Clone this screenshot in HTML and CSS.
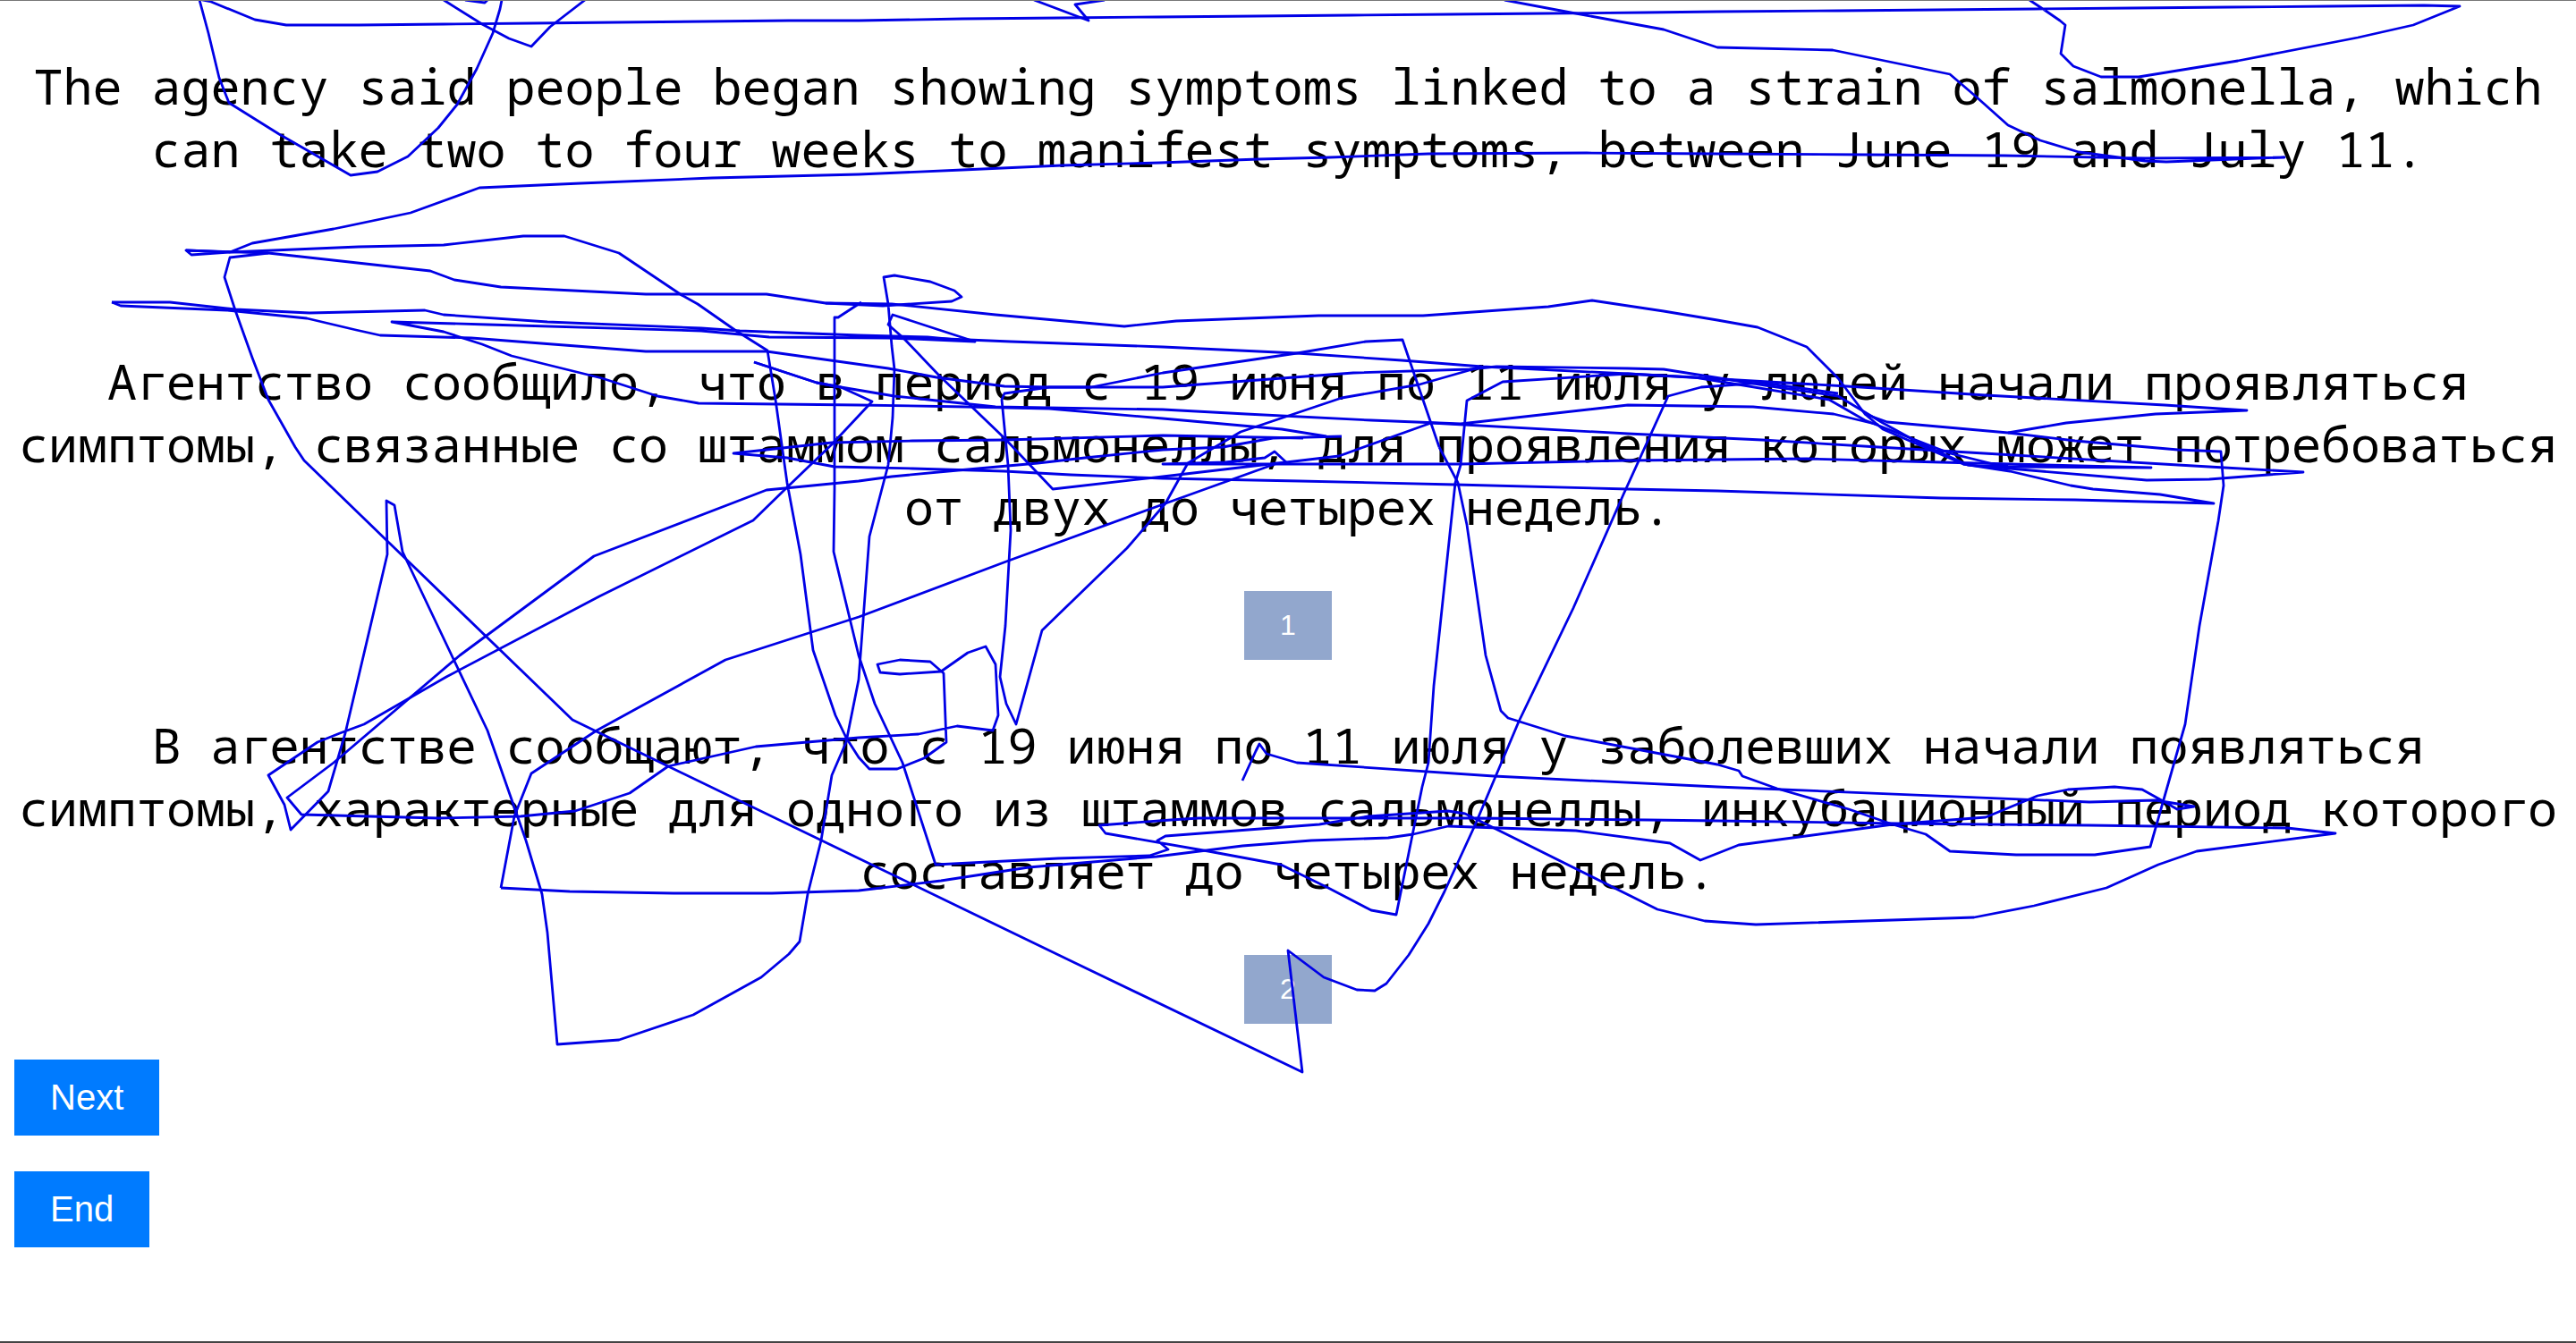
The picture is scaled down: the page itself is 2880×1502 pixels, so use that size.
FILE: index.html
```html
<!DOCTYPE html>
<html lang="en">

<head>
    <meta charset="UTF-8">
    <meta name="viewport" content="width=device-width, initial-scale=1.0">
    <title>Annotation</title>
    <link rel="stylesheet" href="styles.css">
</head>

<body>
    <div class="page">
        <p class="text source">The agency said people began showing symptoms linked to a strain of salmonella, which can take two to four weeks to manifest symptoms, between June 19 and July 11.</p>

        <p class="text option">Агентство сообщило, что в период с 19 июня по 11 июля у людей начали проявляться симптомы, связанные со штаммом сальмонеллы, для проявления которых может потребоваться от двух до четырех недель.</p>
        <div class="badge">1</div>

        <p class="text variant">В агентстве сообщают, что с 19 июня по 11 июля у заболевших начали появляться симптомы, характерные для одного из штаммов сальмонеллы, инкубационный период которого составляет до четырех недель.</p>
        <div class="badge">2</div>

        <div class="actions">
            <button type="button" class="btn">Next</button>
            <button type="button" class="btn">End</button>
        </div>

        <!-- pen strokes drawn over the page -->
        <svg class="scribble" viewBox="0 0 2880 1502" width="2880" height="1502">
            <polyline points="223,0 233,37 245,87 256,115 312,150 392,196 422,192 456,175 490,143 511,117 533,77 551,37 559,10 561,0" />
            <polyline points="226,0 236,2 285,22 320,28 401,28 496,27 594,26 689,25 787,24 882,23 960,23 1076,21 1187,20 1294,19 1404,18 1511,17 1621,16 1728,15 1839,14 1920,13 2055,12 2165,11 2275,10 2383,9 2492,8 2603,7 2710,6 2750,7 2698,28 2636,42 2502,68 2391,86 2349,86 2318,74 2304,60 2309,28 2303,23 2287,12 2269,0" />
            <polyline points="496,0 539,27 569,43 594,52 615,30 654,0" />
            <polyline points="520,0 542,3 545,0" />
            <polyline points="1156,0 1217,23 1202,5 1235,0" />
            <polyline points="1682,0 1756,14 1860,33 1920,53 2049,56 2180,83 2208,107 2245,140 2281,157 2324,170 2398,180 2422,181 2554,176 2398,177 2241,174 2085,173 1920,172 1774,171 1597,172 1487,176 1407,178 1297,182 1187,185 1076,190 960,195 796,199 649,205 536,210 459,238 373,256 282,272 257,282 214,285 208,280 300,283 481,303 508,313 560,321 722,329 857,329 923,339 987,342 1064,337 1075,332 1067,325 1040,315 1000,308 988,310 993,340 997,387 1000,413 998,467 993,520 972,600 960,760 946,830 930,867 918,940 903,1000 894,1053 882,1067 851,1093 775,1135 692,1163 623,1168 612,1043 606,1000 588,940 545,817 505,733 450,617 441,565 432,560 433,620 386,820 367,885 325,928 318,900 300,867 355,830 380,820 407,810 499,757 670,667 842,582 880,545 930,497 975,449 940,433 913,428 843,405" />
            <polyline points="208,280 257,282 401,276 496,274 585,264 631,264 692,283 762,330 780,340 823,370 858,392 867,447 880,540 895,620 909,727 934,800 946,825 960,847 972,860 1003,860 1033,848 1058,830 1055,753 1040,740 1006,738 981,743 984,752 1006,754 1052,751 1082,730 1102,723 1113,743 1116,800 1110,817 1070,812 1027,821 960,825 845,835 747,857 704,887 643,907 582,913 490,915 337,911 321,892 373,853 514,733 664,622 857,548 960,538 997,533 1060,527 1160,518 1213,512 1300,503 1367,500 1423,490 1500,488" />
            <polyline points="1090,382 1047,368 998,352 993,363 1010,378 1050,420 1123,490 1177,547 1300,533 1428,518 1438,517 1425,505 1414,512 1370,517 1300,519 1633,519 1820,515 2020,513 2170,517 2405,523 2245,522 2195,519" />
            <polyline points="963,338 937,355 933,355 933,547 932,617 960,733 978,787 1009,853 1046,967 1183,960 1285,957 1306,950 1294,940 1303,935 1475,922 1530,913 1619,907 1638,910 1853,1017 1906,1030 1963,1034 2207,1026 2274,1013 2355,993 2413,967 2456,952 2611,932 2557,926 2336,923 2122,921 1920,918 1842,917 1652,915 1340,915 1309,917 1229,923 1236,932 1351,952 1432,967 1485,993 1533,1018 1561,1023 1590,880 1597,853 1603,767 1627,540 1633,520 1640,448 1680,427 1820,418 1895,422 2045,447 2085,470 2180,507 2245,523" />
            <polyline points="560,993 575,913 594,865 667,817 811,738 960,690 1125,628 1303,563 1428,518" />
            <polyline points="560,993 637,997 753,999 863,999 960,996 1052,985 1150,970 1293,958 1389,946 1466,940 1552,937 1580,933 1619,924 1762,929 1867,943 1901,962 1944,945 2116,922 2220,914 2278,890 2312,883 2364,880 2395,883 2422,898 2434,905 2453,902 2410,895 2336,897 1920,880 1670,868 1450,853 1416,843 1408,832 1404,840 1389,873" />
            <polyline points="300,283 257,288 251,310 263,347 282,400 300,447 330,500 340,515 435,607 640,805 747,857 960,960 1200,1076 1456,1199 1440,1063 1480,1093 1517,1107 1537,1108 1550,1100 1575,1068 1597,1033 1615,997 1649,923 1698,807 1759,680 1815,553 1865,443 1902,433 1970,428 2055,440" />
            <polyline points="1609,500 1568,380 1527,382 1450,395 1300,417 1220,433 1173,433 1123,440 1120,447 1127,520 1130,593 1124,700 1118,757 1125,787 1136,810 1165,705 1260,613 1303,563 1328,518 1387,483 1500,445 1587,430 1650,412" />
            <polyline points="1609,500 1630,540 1640,587 1661,733 1678,795 1686,803 1750,823 1920,855 1944,862 1948,868 1987,882 2067,905 2116,922 2153,933 2180,952 2254,956 2342,956 2404,947 2443,810 2459,700 2480,583 2486,543 2483,505 2435,503 2320,493 2245,484 2110,472 2085,463" />
            <polyline points="125,338 135,342 254,347 343,356 398,369 425,375 527,378 722,393 857,393 993,412 1047,422 1123,432 1173,433 1300,433 1513,417 1643,413 1673,410 1820,412 1860,413 1980,432 2055,443 2105,473 2145,495 2200,520 2400,537 2470,536 2575,528 2487,523 2435,520 2235,508 2100,500 1970,492 1820,485 1600,473 1497,510 1438,517" />
            <polyline points="125,338 190,338 263,346 346,350 475,347 496,352 612,360 784,367 827,370 960,375 1037,377 1090,382 993,378 860,377 784,370 545,363 438,360 496,371 539,385 572,398 673,423 735,443 781,451 960,453 1080,455 1173,457 1300,468 1433,480 1483,488" />
            <polyline points="1010,377 1130,382 1300,388 1450,395 1567,403 1657,410 1820,418 2065,432 2220,442 2420,453 2512,459 2410,463 2310,473 2245,484" />
            <polyline points="843,405 913,428 940,433 1000,443 1047,448 1113,455 1300,458 1393,463 1533,470 1633,474 1820,453 1960,455 2050,463 2100,475" />
            <polyline points="923,339 997,340 1113,352 1257,365 1315,359 1474,353 1591,353 1731,343 1780,336 1860,348 1920,358 1965,366 2020,388 2055,423 2085,463 2105,480 2195,519 2247,527 2315,543 2340,547 2415,553 2475,563 2320,559 2170,557 1920,549 1820,547 1627,542 1453,538 1300,535 1197,531 1123,527 1020,524 933,522 880,512 820,507 930,495 1020,493 1123,492 1300,487 1457,490" />
        </svg>
    </div>
</body>

</html>
```

FILE: styles.css
```css
html,
body {
    margin: 0;
    padding: 0;
}

.page {
    position: relative;
    box-sizing: border-box;
    height: 1502px;
    padding: 60px 8px 0;
    background: #fff;
    border-top: 1px solid #777;
    border-bottom: 2px solid #444;
    overflow: hidden;
}

.text {
    margin: 0;
    font-family: "Noto Sans Mono", "DejaVu Sans Mono", monospace;
    font-size: 55px;
    line-height: 70px;
    text-align: center;
    color: #000;
}

.option {
    margin-top: 190px;
}

.variant {
    margin-top: 60px;
}

.badge {
    width: fit-content;
    margin: 60px auto 0;
    padding: 20px 40px;
    font-family: "Liberation Sans", Arial, sans-serif;
    font-size: 32px;
    color: #fff;
    background: #92a7cd;
}

.actions {
    display: flex;
    flex-direction: column;
    align-items: flex-start;
    gap: 40px;
    margin-top: 40px;
    padding-left: 8px;
}

.btn {
    padding: 20px 40px;
    border: none;
    font-family: "Liberation Sans", Arial, sans-serif;
    font-size: 40px;
    line-height: 45px;
    color: #fff;
    background: #007bff;
}

.scribble {
    position: absolute;
    top: -1px;
    left: 0;
    fill: none;
    stroke: #0000e6;
    stroke-width: 2.8;
    stroke-linejoin: round;
}
```
